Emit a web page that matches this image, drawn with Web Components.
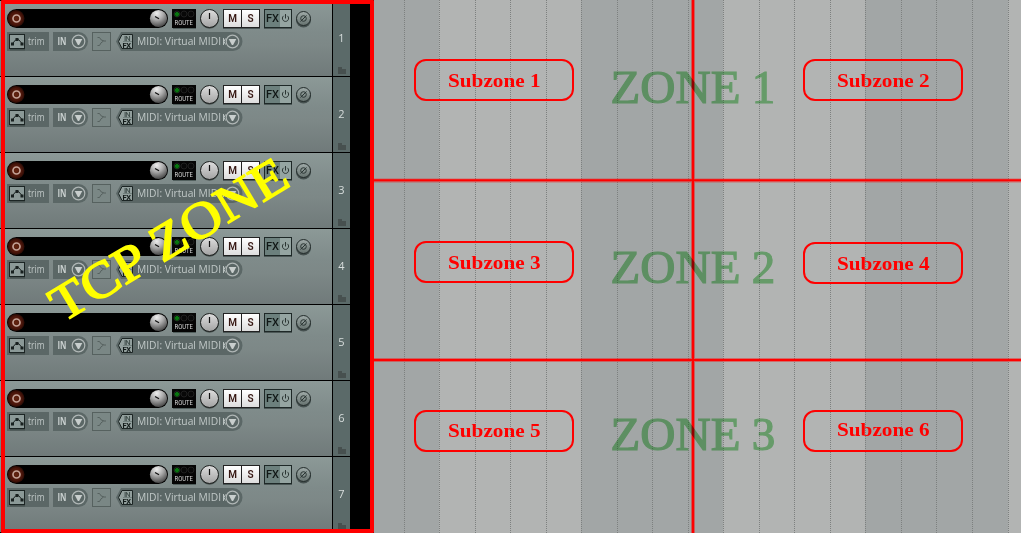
<!DOCTYPE html>
<html lang="en"><head><meta charset="utf-8"><title>Track zones</title>
<style>html,body{margin:0;height:100%;overflow:hidden;background:#a2a6a6}</style></head>
<body><daw-window></daw-window>
<script>
const define=(name,html,after)=>customElements.define(name,class extends HTMLElement{
  constructor(){super();this.attachShadow({mode:'open'})}
  connectedCallback(){this.shadowRoot.innerHTML=typeof html==='function'?html(this):html;if(after)after(this)}
});
const arrow=`<circle r="6.3" fill="none" stroke="#b0b7b6" stroke-width="1.200"/><path d="M-3.800-2.500h7.600L.6 3.500h-1.200z" fill="#c8cecd"/>`;

define('volume-bar',`<style>:host{display:block;width:161px;height:20px}svg{display:block}</style>
<svg width="161" height="20"><defs><radialGradient id="k" cx=".4" cy=".2" r=".85"><stop offset="0" stop-color="#eee"/><stop offset=".45" stop-color="#aaa"/><stop offset="1" stop-color="#3c3c3c"/></radialGradient>
<radialGradient id="r"><stop offset="0" stop-color="#642410"/><stop offset=".7" stop-color="#4c160b"/><stop offset="1" stop-color="#290b05"/></radialGradient></defs>
<rect width="161" height="19" rx="9.500" fill="#000"/><circle cx="9" cy="9.500" r="8.500" fill="url(#r)"/><circle cx="9.500" cy="9.500" r="3.500" fill="none" stroke="#c4a297" stroke-width="1.700"/>
<circle cx="151.500" cy="9.500" r="8.600" fill="url(#k)"/><path d="M148 7.500l4 2.300" stroke="#111" stroke-width="1.300"/></svg>`);

define('route-button',`<style>:host{display:block;width:24px;height:20px}svg{display:block;overflow:visible}text{font:7.500px Roboto,sans-serif;fill:#d8d8d8}</style>
<svg width="24" height="20"><path d="M1 19h23v1H1z" fill="#52605e"/><rect width="24" height="19" fill="#050505"/><g fill="#080808" stroke="#262626" stroke-width=".8"><circle cx="5" cy="5" r="3"/><circle cx="12" cy="5" r="3"/><circle cx="19" cy="5" r="3"/></g><path d="M3.700 3h2.600v1h1v2.500h-1v1H3.700v-1h-1V4h1z" fill="#08750f"/><text x="2.500" y="16" textLength="18.500" lengthAdjust="spacingAndGlyphs">ROUTE</text></svg>`);

define('pan-knob',`<style>:host{display:block;width:20px;height:20px}svg{display:block}</style>
<svg width="20" height="20"><defs><linearGradient id="p" x2="0" y2="1"><stop stop-color="#dedede"/><stop offset="1" stop-color="#a2a2a2"/></linearGradient></defs><circle cx="10.500" cy="10.500" r="9.300" fill="#46514f"/><circle cx="10.500" cy="9.500" r="9" fill="url(#p)" stroke="#1c1f1e"/><path d="M10.500 4v6" stroke="#111" stroke-width="1.200"/></svg>`);

define('mute-solo',`<style>:host{display:flex;gap:1px;width:35px;height:17px;border:1px solid #222;background:#222;box-shadow:0 1px #4c5857}
span{flex:1;background:linear-gradient(#fff,#ddd);font:600 10px/18px Roboto,sans-serif;text-align:center;color:#351611}</style><span>M</span><span>S</span>`);

define('fx-button',`<style>:host{display:flex;width:26px;height:17px;border:1px solid #1e2827;background:#95a5a2;box-shadow:0 1px #4c5857}
span{width:15px;background:#6c807d;font:500 11px/18px Roboto,sans-serif;text-align:center;color:#111817}svg{display:block}</style>
<span>FX</span><svg width="11" height="17" fill="none" stroke="#2b3533"><path d="M3.700 5.800a3.100 3.100 0 1 0 3.600 0M5.500 4v4.500"/></svg>`);

define('phase-button',`<style>:host{display:block;width:16px;height:20px}svg{display:block}</style>
<svg width="16" height="20"><defs><linearGradient id="g" x2="0" y2="1"><stop stop-color="#a0aba9"/><stop offset="1" stop-color="#66726f"/></linearGradient></defs><circle cx="7.500" cy="11" r="7.500" fill="#45504f"/><circle cx="7.500" cy="9.500" r="7" fill="url(#g)" stroke="#222b2a"/><circle cx="7.500" cy="9.500" r="2.800" fill="none" stroke="#2b3634"/><path d="M4.500 12.500l6-6" stroke="#2b3634"/></svg>`);

define('trim-button',`<style>:host{display:block;width:42px;height:19px;background:#5b6766}svg{display:block}text{font:11px "Open Sans",sans-serif;fill:#c0c8c7}</style>
<svg width="42" height="19"><path d="M3 17h15v1.500H3z" fill="#46514f"/><rect x="2.500" y="2.500" width="15" height="14" fill="#8b9997" stroke="#1c2524"/><path d="M5 12l4-4.500h2.500l4 4.500" fill="none" stroke="#18201f"/><path d="M4 10.500h3v3H4zM8.500 6h3v3h-3zM13.500 10.500h3v3h-3z" fill="#18201f"/><text x="21" y="13.300" textLength="16.500" lengthAdjust="spacingAndGlyphs">trim</text></svg>`);

define('input-button',`<style>:host{display:block;width:35px;height:19px;background:#5b6766;border-radius:0 9.500px 9.500px 0}svg{display:block}text{font:700 10.500px "Open Sans",sans-serif;fill:#c8cfce}</style>
<svg width="35" height="19"><text x="4.500" y="13.300" textLength="9" lengthAdjust="spacingAndGlyphs">IN</text><g transform="translate(25.500 9.500)">${arrow}</g></svg>`);

define('shape-button',`<style>:host{display:block;width:19px;height:19px}svg{display:block}</style>
<svg width="19" height="19" fill="none" stroke="#56615f"><rect x=".5" y=".5" width="18" height="18" fill="#7a8785"/><path d="M5.500 5.500h2q1 3 4.500 3.500h2M5.500 13.500h2q1-3 4-4.500"/></svg>`);

define('record-source',`<style>:host{display:block;width:127px;height:19px;margin-left:1px}svg{display:block}text{font:11px "Open Sans",sans-serif;fill:#c0c8c7}.s{font:500 7.500px Roboto,sans-serif}</style>
<svg width="127" height="19"><path d="M5 0h112a9.500 9.500 0 0 1 0 19H5L0 9.500z" fill="#5b6766"/><path d="M6 2.500h10.500v14H6L2.500 9.500z" fill="#93a09e" stroke="#1c2524"/><path d="M7 9.500h9" stroke="#71807d"/><text class="s" x="8" y="8.500" textLength="6.500" style="fill:#3f4d4a">IN</text><text class="s" x="6.500" y="15.700" textLength="8.500" style="font-weight:700;fill:#111918">FX</text>
<text x="21" y="13.300" textLength="84" lengthAdjust="spacingAndGlyphs">MIDI: Virtual MIDI</text><path d="M107.500 6v7M109.500 6.500l-1.500 3 1.500 3" stroke="#b9c1c0" fill="none"/><g transform="translate(116.500 9.500)">${arrow}</g></svg>`);

define('track-row',el=>`<style>:host{display:flex;height:76px;box-sizing:border-box;border-top:1px solid #000;background:#000}
main{box-sizing:border-box;width:332px;padding:8px 0 0 7px;background:linear-gradient(#8c9997,#7f8b8a 30px,#7d8887 44px,#707a7a)}
.a,.b{display:flex;height:20px}.b{height:19px;margin-top:3px;gap:4px}
route-button{margin-left:4px}pan-knob{margin:0 4px 0 3px}fx-button{margin:0 4px}
aside{display:flex;flex-direction:column;align-items:center;box-sizing:border-box;width:17px;margin-left:1px;background:#5b6a69;font:11px/14px "Open Sans",sans-serif;color:#d7dddc;padding-top:30px}
svg{margin-top:22px}</style>
<main><div class="a"><volume-bar></volume-bar><route-button></route-button><pan-knob></pan-knob><mute-solo></mute-solo><fx-button></fx-button><phase-button></phase-button></div>
<div class="b"><trim-button></trim-button><input-button></input-button><shape-button></shape-button><record-source></record-source></div></main>
<aside><span>${el.getAttribute('number')}</span><svg width="8" height="7"><path d="M0 0h4v2h4v5H0z" fill="#47504f"/></svg></aside>`);

define('track-panel',`<style>:host{display:block;position:relative;width:374px;height:533px;background:#000;overflow:hidden}
.frame{position:absolute;left:1px;top:0;width:365px;height:525px;border:4px solid #f00;border-radius:1px}
svg{position:absolute;left:0;top:0}text{font:51px "Liberation Serif",serif;fill:#ff0;stroke:#ff0;stroke-width:1.500}</style>
${[1,2,3,4,5,6,7].map(n=>`<track-row number="${n}"></track-row>`).join('')}
<div class="frame"></div><svg width="374" height="533"><text transform="translate(62.500 323) rotate(-31)" textLength="268" lengthAdjust="spacingAndGlyphs">TCP ZONE</text></svg>`);

define('sub-zone',`<style>:host{display:block;box-sizing:border-box;width:160px;height:42px;border:2px solid #f00;border-radius:12px}svg{display:block}text{font:700 18.500px "Liberation Serif",serif;fill:#f00}</style>
<svg width="156" height="38"><text x="32" y="26" textLength="92.500" lengthAdjust="spacingAndGlyphs"></text></svg>`,el=>{
  const t=el.shadowRoot.querySelector('text');t.textContent='Subzone '+el.getAttribute('number');t.setAttribute('y',el.getAttribute('base'));
});

const lines=[404,439,475,510,546,581,617,652,688,723,759,794,830,865,901,936,972,1008];
define('arrange-view',`<style>:host{display:block;position:relative;flex:1;height:533px;overflow:hidden;
background:linear-gradient(90deg,#a2a6a6 65px,#b2b4b3 65px 207px,#a2a6a6 207px 349px,#b2b4b3 349px 491px,#a2a6a6 491px 634px,#b2b4b3 634px)}
svg{position:absolute;left:0;top:0}.z{mix-blend-mode:multiply}.z text{font:47px "Liberation Serif",serif;fill:#92dc96;stroke:#92dc96;stroke-width:1.200}
sub-zone{position:absolute}</style>
<svg width="647" height="533"><g stroke="#7d807f" stroke-dasharray="1 1">${lines.map(x=>`<path d="M${x-373.5} 0V533"/>`).join('')}</g>
<path d="M0 180.500H647M0 360H647M319 0V533" stroke="#f00" stroke-opacity=".4" stroke-width="4"/><path d="M0 180.200H647M0 360H647M319 0V533" stroke="#f00" stroke-width="2.100"/></svg>
<svg class="z" width="647" height="533">${[[1,102.7],[2,283],[3,450]].map(([n,y])=>`<text x="236.500" y="${y}"><tspan textLength="130" lengthAdjust="spacingAndGlyphs">ZONE</tspan><tspan x="366"> ${n}</tspan></text>`).join('')}</svg>
${[[1,40,59,26],[2,429,59,26],[3,40,241,26],[4,429,242,26],[5,40,410,25],[6,429,410,24]].map(([n,x,y,b])=>`<sub-zone number="${n}" base="${b}" style="left:${x}px;top:${y}px"></sub-zone>`).join('')}`);

define('daw-window',`<style>:host{display:flex;width:1021px;height:533px;overflow:hidden}</style><track-panel></track-panel><arrange-view></arrange-view>`);
</script></body></html>
